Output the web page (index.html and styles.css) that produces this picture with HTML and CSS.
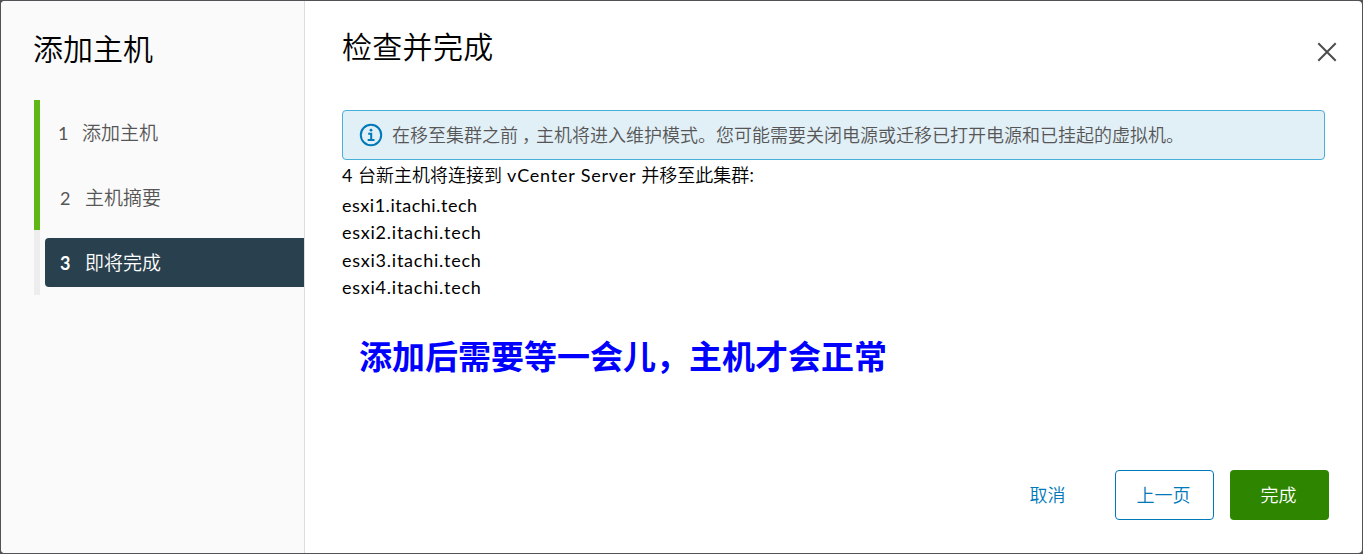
FILE: index.html
```html
<!DOCTYPE html>
<html lang="zh-CN">
<head>
<meta charset="utf-8">
<title>添加主机</title>
<link rel="stylesheet" href="styles.css">
</head>
<body>
<div class="modal">
  <nav class="sidebar">
    <h1 class="title sidebar-title">添加主机</h1>
    <ol class="steps">
      <li class="step done first"><div class="step-link"><span class="num">1</span><span class="step-label">添加主机</span></div></li>
      <li class="step done"><div class="step-link"><span class="num">2</span><span class="step-label">主机摘要</span></div></li>
      <li class="step"><div class="step-link active"><span class="num">3</span><span class="step-label">即将完成</span></div></li>
    </ol>
  </nav>
  <main class="content">
    <header class="head">
      <h2 class="title page-title">检查并完成</h2>
      <svg class="close" width="20" height="20" viewBox="0 0 20 20"><path d="M1.3 1.3L18.7 18.7M18.7 1.3L1.3 18.7"/></svg>
    </header>
    <div class="alert">
      <svg class="info" width="24" height="24" viewBox="0 0 24 24"><circle cx="12" cy="12" r="10.2"/><circle class="dot" cx="12" cy="7.2" r="1.4"/><path d="M9.2 10.7H12.2V17M8.7 17H15.5"/></svg>
      <p class="alert-text">在移至集群之前<span class="comma">，</span>主机将进入维护模式。您可能需要关闭电源或迁移已打开电源和已挂起的虚拟机。</p>
    </div>
    <p class="summary"><span class="latin">4 </span>台新主机将连接到 <span class="latin product">vCenter Server</span> 并移至此集群:</p>
    <ul class="hosts">
      <li class="first-host">esxi1.itachi.tech</li>
      <li>esxi2.itachi.tech</li>
      <li>esxi3.itachi.tech</li>
      <li>esxi4.itachi.tech</li>
    </ul>
    <p class="note">添加后需要等一会儿，主机才会正常</p>
    <footer class="actions">
      <button class="btn link">取消</button>
      <button class="btn outline">上一页</button>
      <button class="btn primary">完成</button>
    </footer>
  </main>
</div>
</body>
</html>
```
FILE: styles.css
```css
* { box-sizing: border-box; margin: 0; padding: 0; }
body {
  height: 554px;
  padding: 1px;
  overflow: hidden;
  background: #535155;
  color: #000;
  font-family: "Noto Sans CJK SC", sans-serif;
  font-weight: 350;
}
.modal { display: flex; width: 1361px; height: 552px; overflow: hidden; border-radius: 4px; background: #fff; }
.sidebar { width: 304px; flex: none; border-right: 1px solid #ddd; background: #fafafa; }
.title { font-size: 30px; line-height: 40px; font-weight: 350; }
.sidebar-title { padding: 26px 0 0 32px; }
.page-title { letter-spacing: .3px; }
.steps { list-style: none; margin: 33px 0 0 33px; }
.step { display: flex; height: 65px; padding-left: 5px; align-items: center; border-left: 6px solid #ededed; font-size: 19px; color: #565656; }
.step.done { border-left-color: #5eb715; }
.step-link { display: flex; align-items: center; width: 100%; height: 49px; padding-left: 15px; border-radius: 4px 0 0 4px; }
.step-label { padding-bottom: 2px; }
.active { background: #29414e; color: #fff; }
.num { width: 25px; font: 400 18px "Lato", sans-serif; }
.first .step-link { padding-left: 13px; }
.first .num { width: 24px; }
.active .num { font-weight: 700; }
.content { display: flex; flex: 1; flex-direction: column; padding: 24px 33px 33px 37px; }
.head { display: flex; flex: none; justify-content: space-between; height: 85px; }
.close { margin: 17px -8px 0 0; fill: none; stroke: #4c4c4e; stroke-width: 2; }
.alert { display: flex; align-items: center; width: 983px; height: 50px; padding-left: 16px; gap: 9px; border: 1px solid #49afd9; border-radius: 4px; background: #e1eff6; color: #565656; }
.info { fill: none; stroke: #0079b8; stroke-width: 2; }
.info .dot { fill: #0079b8; stroke: none; }
.alert-text { padding-bottom: 2px; font-size: 18px; white-space: nowrap; }
.comma { padding-left: 4px; margin-right: -4px; }
.summary { height: 32px; font-size: 18px; line-height: 29px; white-space: nowrap; }
.latin { font-family: "Lato", sans-serif; font-weight: 400; letter-spacing: .5px; }
.product { margin: 0 1px; letter-spacing: .8px; }
.hosts { list-style: none; font: 400 18px/27.4px "Lato", sans-serif; letter-spacing: .76px; }
.first-host { letter-spacing: .52px; }
.note { margin: 29px 0 0 17px; color: #00f; font-size: 33px; line-height: 48px; font-weight: 700; white-space: nowrap; }
.actions { display: flex; justify-content: flex-end; gap: 16px; margin-top: auto; }
.btn { width: 99px; height: 50px; padding: 0 2px 2px 0; border: 1px solid transparent; border-radius: 4px; background: none; font: 350 18px "Noto Sans CJK SC", sans-serif; }
.link { width: 103px; padding-right: 0; color: #0079b8; }
.outline { border-color: #0079b8; color: #0079b8; }
.primary { background: #2e8500; color: #fff; }
```
